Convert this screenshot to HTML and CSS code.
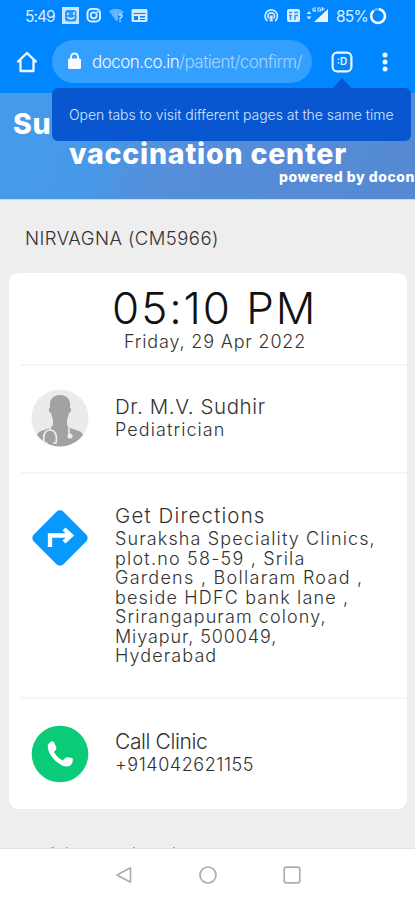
FILE: index.html
```html
<!DOCTYPE html>
<html lang="en">
<head>
<meta charset="utf-8">
<title>Appointment confirmation</title>
<link rel="stylesheet" href="styles.css">
</head>
<body>
<div class="phone">
  <header class="browser">
    <div class="status">
      <span class="clock">5:49</span>
      <svg class="status-left" width="86" height="18" viewBox="0 0 86 18">
        <rect x="0" y="0" width="17" height="17" fill="#cce7ff"/>
        <rect x="3" y="3" width="11.500" height="11.500" rx="3" fill="#2b98ff"/>
        <path d="M6 6v2M12 5v3M5.500 10q3.500 3.500 7 0" fill="none" stroke="#e4f2ff" stroke-width="1.500"/>
        <rect x="25.500" y="2" width="12.500" height="12.500" rx="4" fill="none" stroke="#d9edff" stroke-width="2"/>
        <circle cx="31.700" cy="8.300" r="3" fill="none" stroke="#d9edff" stroke-width="1.800"/>
        <circle cx="35.500" cy="4.800" r="1" fill="#d9edff"/>
        <path d="M47 4q8-5 15 1l-3 3-3 0v5l-2 1z" fill="#65b5ff"/>
        <path d="M57 8q3.500-1 3 1.500l-2 2v1M58 13.500v1.500" fill="none" stroke="#cce7ff" stroke-width="1.500"/>
        <path fill-rule="evenodd" d="M71 2h13q1.500 0 1.500 1.500v10q0 1.500-1.500 1.500h-13q-1.500 0-1.500-1.500v-10q0-1.500 1.500-1.500zM71.500 6v1h12v-1zM72 9v4h4v-4zM78 9v1.500h5v-1.500zM78 12v1h5v-1z" fill="#d2e9ff"/>
      </svg>
      <svg class="status-right" width="66" height="18" viewBox="0 0 66 18">
        <g fill="none" stroke="#cce7ff" stroke-width="1.700"><path d="M3.500 14a6.200 6.200 0 1 1 7.500 0M5 11.500a3.300 3.300 0 1 1 4.500 0"/><path d="M7.200 8.500v6" stroke-width="3"/></g>
        <rect x="23" y="2" width="13" height="13" rx="2" fill="#d9edff"/>
        <path d="M25 5.500h3M30 5.500h4M25 8.500h3M31 8.500h3M26.500 8v5M31 8v5" stroke="#2898ff" stroke-width="1.400"/>
        <path d="M42.500 7l2.500-3 2.500 3zM42.500 9.500l2.500 3 2.500-3z" fill="#cce7ff"/>
        <path d="M64 2v13h-14z" fill="#e9f5ff"/>
        <path d="M49 1v3h3M51 0v5M56.500 1h-2.500v3h2.500v-2M58.500 0v4M57 2h4" fill="none" stroke="#cce7ff" stroke-width="1.100"/>
      </svg>
      <span class="battery">85%</span>
      <svg class="ring" width="18" height="18" viewBox="0 0 18 18"><circle cx="9" cy="9" r="6.900" fill="none" stroke="#65b5ff" stroke-width="2.400"/><path d="M10 2.200a6.900 6.900 0 1 1-5.500 1.700" fill="none" stroke="#fff" stroke-width="2.400"/></svg>
    </div>
    <div class="toolbar">
      <svg class="home" width="22" height="22" viewBox="0 0 22 22"><path d="M1.500 11.200 11 2l9.500 9.200M4.500 9v11h13V9" fill="none" stroke="#f1f9ff" stroke-width="2.300" stroke-linejoin="round"/></svg>
      <div class="address">
        <svg class="lock" width="13" height="18" viewBox="0 0 13 18"><rect y="6.500" width="13" height="10.500" rx="1.500" fill="#f6fbff"/><path d="M3 7.500V5a3.500 3.500 0 0 1 7 0v2.500" fill="none" stroke="#f6fbff" stroke-width="1.900"/></svg>
        <span class="url">docon.co.in<span class="path">/patient/confirm/</span></span>
      </div>
      <div class="tabs">
        <svg width="22" height="22" viewBox="0 0 22 22"><rect x="1.600" y="1.600" width="18.800" height="18.800" rx="4.500" fill="none" stroke="#eef7ff" stroke-width="2.200"/></svg>
        <span class="tab-label">:D</span>
        <div class="tooltip">Open tabs to visit different pages at the same time</div>
      </div>
      <svg class="dots" width="6" height="20" viewBox="0 0 6 20"><g fill="#f1f9ff"><circle cx="3" cy="3" r="2.500"/><circle cx="3" cy="10" r="2.500"/><circle cx="3" cy="17" r="2.500"/></g></svg>
    </div>
  </header>
  <section class="banner">
    <h1><span class="name">Su</span><span class="center">vaccination center</span></h1>
    <p class="powered">powered by docon</p>
  </section>
  <main class="content">
    <h2 class="patient">NIRVAGNA (CM5966)</h2>
    <div class="card">
      <div class="when">
        <div class="time">05:10 PM</div>
        <div class="date">Friday, 29 Apr 2022</div>
      </div>
      <div class="row doctor">
        <svg class="icon" width="58" height="58" viewBox="0 0 58 58">
          <defs><clipPath id="disc"><circle cx="29" cy="29" r="28.500"/></clipPath></defs>
          <circle cx="29" cy="29" r="28.500" fill="#ebebeb"/>
          <g clip-path="url(#disc)"><path d="M19 15c0-12 20-12 20 0v4c2 0 1 5-1 5-1 4-2 6-2 8v4l3 3 9 3q6 2 8 16H2q2-14 8-16l9-3 3-3v-4c0-2-1-4-2-8-2 0-3-5-1-5z" fill="#a1a2a4"/>
          <path d="M16.500 54h-3c-2-7 0-13 5.500-13s7.500 6 6 13h-3M19 41v-4M38 37v8" fill="none" stroke="#ededed" stroke-width="1.600"/><circle cx="39" cy="47" r="2.600" fill="#ededed"/></g>
        </svg>
        <div class="text"><div class="title t-doctor">Dr. M.V. Sudhir</div><div class="detail d-role">Pediatrician</div></div>
      </div>
      <div class="row directions">
        <svg class="icon" width="58" height="58" viewBox="0 0 58 58"><rect x="8" y="8" width="42" height="42" rx="5" transform="rotate(45 29 29)" fill="#0799fe"/><path d="M19 38V26.500H40M33 20l7 6.500-7 6.500" fill="none" stroke="#fff" stroke-width="4.300"/></svg>
        <div class="text"><div class="title t-directions">Get Directions</div>
          <div class="detail address-lines"><div class="a1">Suraksha Speciality Clinics,</div><div class="a2">plot.no 58-59 , Srila</div><div class="a3">Gardens , Bollaram Road ,</div><div class="a4">beside HDFC bank lane ,</div><div class="a5">Srirangapuram colony,</div><div class="a6">Miyapur, 500049,</div><div class="a7">Hyderabad</div></div>
        </div>
      </div>
      <div class="row call">
        <svg class="icon" width="58" height="58" viewBox="0 0 58 58"><circle cx="29" cy="29" r="28.300" fill="#0acb77"/><path d="M17 19.500q3-4 5.500-3l3 6q0 2-2.500 4.500 3 5.500 8.500 8.500l3.500-3q1-.7 6 .5 1.500.5.500 4-1.500 5-7 4.500C26 40 15 27.500 17 19.500z" fill="#fff"/></svg>
        <div class="text"><div class="title t-call">Call Clinic</div><div class="detail d-phone">+914042621155</div></div>
      </div>
    </div>
    <div class="edge"><i></i><i></i><i></i><i></i></div>
  </main>
  <nav class="nav">
    <svg width="18" height="18" viewBox="0 0 18 18"><path d="M15.500 1.800v14.400L2 9z"/></svg>
    <svg width="18" height="18" viewBox="0 0 18 18"><circle cx="9" cy="9" r="8"/></svg>
    <svg width="18" height="18" viewBox="0 0 18 18"><rect x="1.200" y="1.200" width="15.600" height="15.600" rx="2"/></svg>
  </nav>
</div>
</body>
</html>
```

FILE: styles.css
```css
* { box-sizing: border-box; }
body { margin: 0; background: #fff; font-family: Inter, "Liberation Sans", sans-serif; }
svg { display: block; flex: none; }
h1, h2, p { margin: 0; }
.phone { width: 415px; height: 900px; display: flex; flex-direction: column; overflow: hidden; white-space: nowrap; }

.browser { height: 93px; flex: none; background: #0087ff; }
.status { height: 32px; display: flex; align-items: center; padding-left: 25px; color: #d9edff; font-size: 15.500px; }
.clock { width: 37px; letter-spacing: -1px; }
.status-left { width: 86px; }
.status-right { width: 66px; margin-left: 116px; }
.battery { width: 31px; margin-left: 6px; letter-spacing: -.8px; }
.ring { margin-left: 2px; }
.toolbar { height: 61px; display: flex; align-items: flex-start; padding: 8px 0 0 16px; }
.home { margin-top: 11px; }
.address { width: 260px; height: 43px; margin-left: 14px; border-radius: 22px; background: #339fff; display: flex; align-items: center; padding-left: 16px; }
.lock { margin-top: -2px; }
.url { margin-left: 11px; color: #f4faff; font-size: 17px; letter-spacing: -.54px; font-weight: 350; }
.path { color: #a6d5ff; }
.tabs { position: relative; width: 22px; height: 22px; margin: 11px 0 0 19px; }
.tabs::after { content: ""; position: absolute; left: 2px; top: 27px; border: solid transparent; border-width: 0 9px 10px; border-bottom-color: #0957d0; }
.tab-label { position: absolute; inset: 0; line-height: 21px; text-align: center; color: #eef7ff; font-size: 10px; font-weight: 600; }
.tooltip { position: absolute; z-index: 2; right: -58px; top: 37px; width: 359px; height: 53px; border-radius: 6px; background: #0957d0; color: #d8e6ff; font-size: 14px; line-height: 53px; letter-spacing: -.03px; padding-left: 17px; font-weight: 350; }
.dots { margin: 12px 0 0 29px; }

.banner { height: 107px; flex: none; padding-top: 16px; color: #fff; background: linear-gradient(105deg, #459bea 0%, #4699e8 24%, #568ed9 42%, #5589d4 100%); border-bottom: 1px solid #cbd9e9; }
.banner h1 { display: flex; flex-direction: column; font-size: 28.500px; line-height: 30px; font-weight: 800; letter-spacing: .8px; }
.name { margin-left: 13px; }
.center { margin-left: 69px; }
.powered { margin-left: 279px; font-size: 14px; line-height: 16px; font-weight: 800; letter-spacing: .52px; }

.content { height: 649px; flex: none; background: #eee; display: flex; flex-direction: column; }
.patient { margin: 26px 0 0 25px; height: 47px; font-size: 18.500px; line-height: 24px; font-weight: 300; letter-spacing: .45px; color: #333; }
.card { width: 398px; height: 536px; margin-left: 9px; border-radius: 9px; background: #fff; padding-left: 12px; color: #333; }
.when { height: 91px; padding: 11px 0 0 91px; }
.time { font-size: 44px; line-height: 48px; font-weight: 300; letter-spacing: 1.950px; color: #111; }
.date { margin-left: 12px; font-size: 18px; line-height: 20px; font-weight: 300; letter-spacing: .83px; }
.row { display: flex; border-top: 2px solid #f5f5f5; padding-left: 10px; }
.text { margin-left: 26px; }
.title { font-size: 20.500px; line-height: 24px; font-weight: 300; }
.detail { font-size: 18px; line-height: 19.500px; font-weight: 300; }
.t-doctor { letter-spacing: .6px; }
.d-role { letter-spacing: 1.080px; }
.t-directions { letter-spacing: 1.140px; }
.a1 { letter-spacing: 1.120px; }
.a2 { letter-spacing: 1.200px; }
.a3 { letter-spacing: 1.280px; }
.a4 { letter-spacing: 1.170px; }
.a5, .a7 { letter-spacing: 1.100px; }
.a6 { letter-spacing: .9px; }
.title.t-call { font-size: 21px; letter-spacing: -.4px; }
.d-phone { font-size: 18px; letter-spacing: .55px; }
.doctor { height: 108px; padding-top: 23px; }
.doctor .text { margin-top: 6px; }
.doctor .detail, .call .detail { line-height: 22px; }
.directions { height: 225px; padding-top: 35px; }
.directions .text { margin-top: -5px; }
.address-lines { margin-top: 1px; }
.call { padding-top: 26px; }
.call .text { margin-top: 5px; }

.edge { margin-top: auto; height: 2px; display: flex; border-bottom: 1px solid #e2e2e2; padding-left: 51px; }
.edge i { width: 3px; height: 1px; background: #aaa; margin-right: 12px; }
.edge i:nth-child(2) { width: 2px; margin-right: 65px; }
.edge i:nth-child(3) { width: 2px; margin-right: 38px; }
.edge i:nth-child(4) { width: 2px; }
.nav { flex: 1; background: #fff; display: flex; gap: 66px; padding: 17px 0 0 115px; }
.nav svg { fill: none; stroke: #adadad; stroke-width: 1.700; stroke-linejoin: round; }
```
